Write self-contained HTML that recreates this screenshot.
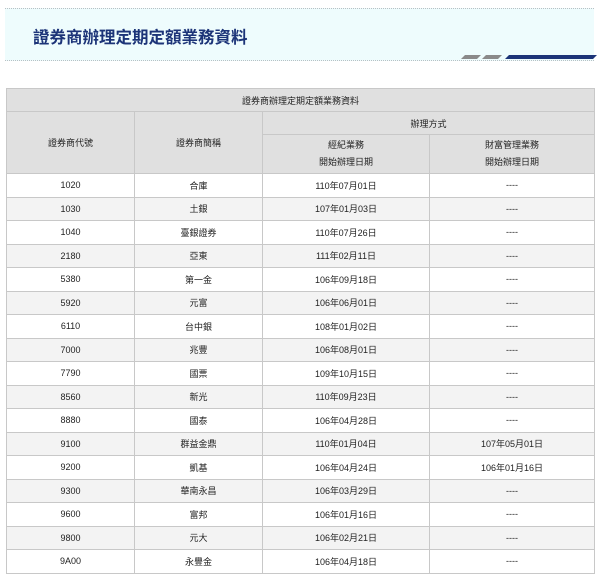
<!DOCTYPE html>
<html><head><meta charset="utf-8"><style>
body{margin:0;background:#fff;width:600px;height:581px;overflow:hidden;font-family:"Liberation Sans","Noto Sans CJK TC",sans-serif;}
.band{position:absolute;left:5px;top:8px;width:589px;height:51px;background:#eefcfd;border-top:1px dotted #b8c0c4;border-bottom:1px dotted #b8c0c4;}
.band h1{margin:0;position:absolute;left:28px;top:15px;font-size:16.5px;font-weight:bold;color:#1c3478;font-family:"Noto Sans CJK TC",sans-serif;letter-spacing:0px;}
.s{position:absolute;top:55px;height:4px;transform:skewX(-45deg);}
table{position:absolute;left:6px;top:88px;width:589px;border-collapse:collapse;font-size:9px;color:#222;text-align:center;}
td,th{border:1px solid #c8c8c8;font-weight:normal;padding:0;}
th{background:#e0e0e0;height:22px;}
td{height:22.5px;}
tr.g td{background:#f3f3f3;}
.sub{height:38px;line-height:17px;}
</style></head><body>
<div class="band"><h1>證券商辦理定期定額業務資料</h1></div>
<div class="s" style="left:463px;width:16px;background:#8a8a8a"></div>
<div class="s" style="left:484px;width:16px;background:#8a8a8a"></div>
<div class="s" style="left:507px;width:88px;background:#1c3478"></div>
<table>
<tr><th colspan="4">證券商辦理定期定額業務資料</th></tr>
<tr><th rowspan="2" style="width:127px">證券商代號</th><th rowspan="2" style="width:127px">證券商簡稱</th><th colspan="2">辦理方式</th></tr>
<tr><th class="sub" style="width:166px">經紀業務<br>開始辦理日期</th><th class="sub">財富管理業務<br>開始辦理日期</th></tr>
<tr><td>1020</td><td>合庫</td><td>110年07月01日</td><td>----</td></tr>
<tr class="g"><td>1030</td><td>土銀</td><td>107年01月03日</td><td>----</td></tr>
<tr><td>1040</td><td>臺銀證券</td><td>110年07月26日</td><td>----</td></tr>
<tr class="g"><td>2180</td><td>亞東</td><td>111年02月11日</td><td>----</td></tr>
<tr><td>5380</td><td>第一金</td><td>106年09月18日</td><td>----</td></tr>
<tr class="g"><td>5920</td><td>元富</td><td>106年06月01日</td><td>----</td></tr>
<tr><td>6110</td><td>台中銀</td><td>108年01月02日</td><td>----</td></tr>
<tr class="g"><td>7000</td><td>兆豐</td><td>106年08月01日</td><td>----</td></tr>
<tr><td>7790</td><td>國票</td><td>109年10月15日</td><td>----</td></tr>
<tr class="g"><td>8560</td><td>新光</td><td>110年09月23日</td><td>----</td></tr>
<tr><td>8880</td><td>國泰</td><td>106年04月28日</td><td>----</td></tr>
<tr class="g"><td>9100</td><td>群益金鼎</td><td>110年01月04日</td><td>107年05月01日</td></tr>
<tr><td>9200</td><td>凱基</td><td>106年04月24日</td><td>106年01月16日</td></tr>
<tr class="g"><td>9300</td><td>華南永昌</td><td>106年03月29日</td><td>----</td></tr>
<tr><td>9600</td><td>富邦</td><td>106年01月16日</td><td>----</td></tr>
<tr class="g"><td>9800</td><td>元大</td><td>106年02月21日</td><td>----</td></tr>
<tr><td>9A00</td><td>永豐金</td><td>106年04月18日</td><td>----</td></tr>
</table>
</body></html>
